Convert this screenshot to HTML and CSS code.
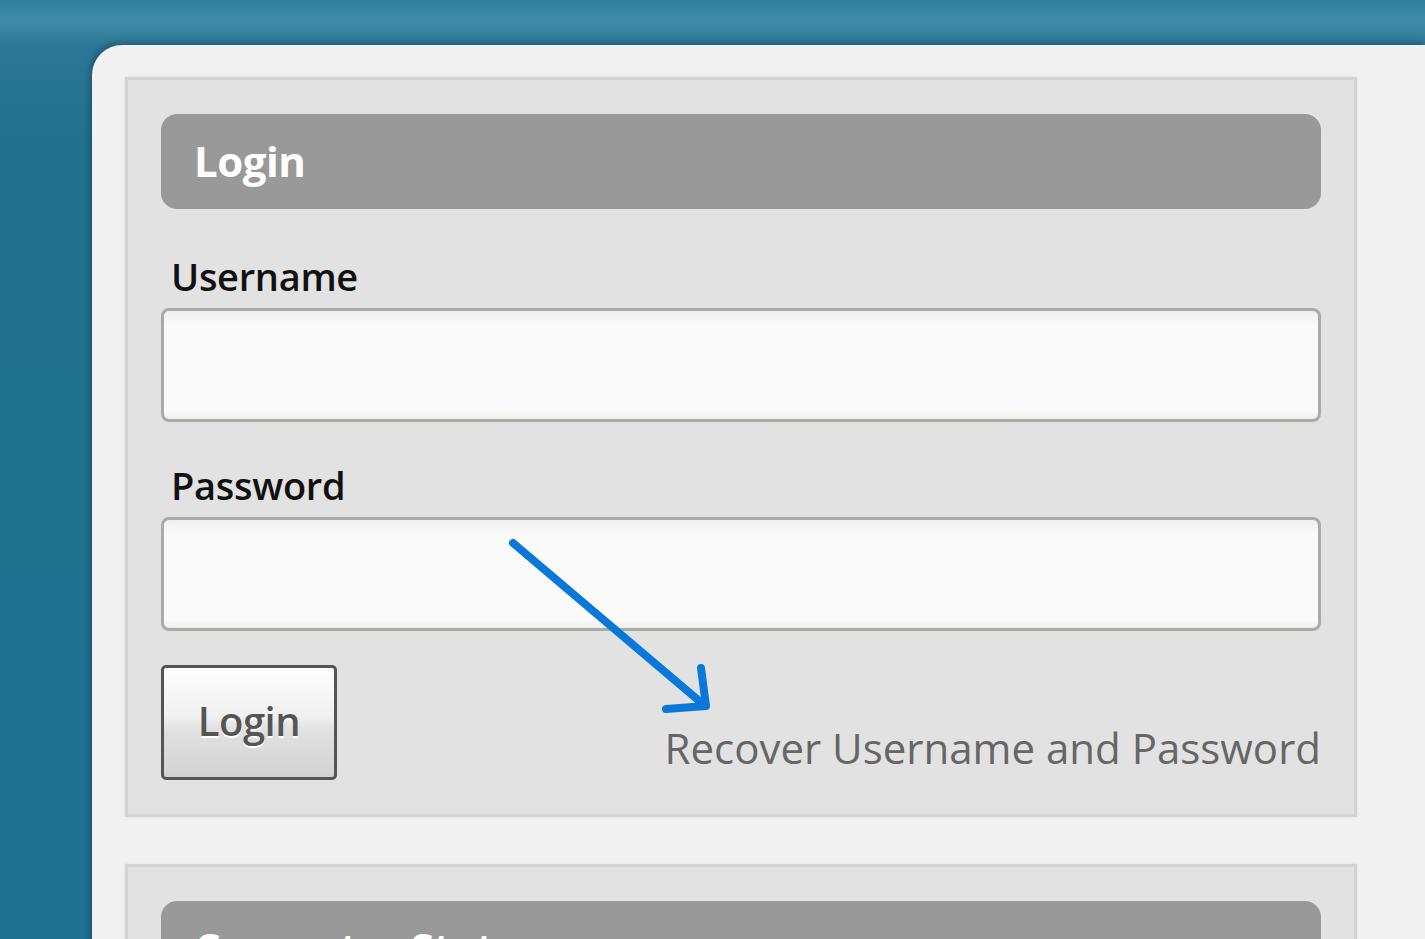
FILE: index.html
```html
<!DOCTYPE html>
<html lang="en">
<head>
    <meta charset="UTF-8">
    <title>Login</title>
    <link rel="stylesheet" href="styles.css">
</head>
<body>
    <div class="page">
        <div class="panel">
            <form class="box" action="#" method="post">
                <h2 class="head">Login</h2>
                <label class="lbl" for="user">Username</label>
                <input class="field" type="text" id="user" name="user">
                <label class="lbl" for="pwd">Password</label>
                <input class="field" type="password" id="pwd" name="pwd">
                <div class="actions">
                    <button class="btn" type="submit">Login</button>
                    <a class="recover" href="#">Recover Username and Password</a>
                </div>
                <svg class="arrow" width="220" height="190" viewBox="0 0 220 190">
                    <path d="M10 10 L201 172" />
                    <path d="M163 176 L203 173 L198 135" />
                </svg>
            </form>
            <div class="box">
                <h2 class="head">Computer Status</h2>
            </div>
        </div>
    </div>
</body>
</html>
```

FILE: styles.css
```css
html, body {
    margin: 0;
    height: 100%;
    overflow: hidden;
}
body {
    font-family: "Open Sans", "Noto Sans", sans-serif;
    background: linear-gradient(to bottom, #2f7e9b 0, #3e8ca7 20px, #2b7896 46px, #21718f 140px, #20708f 100%);
}
.page {
    padding: 45px 0 0 92px;
}
.panel {
    background: #f1f1f1;
    border-radius: 30px 0 0 0;
    padding: 32px 68px 0 33px;
    height: 1000px;
    box-shadow: -2px -2px 6px rgba(0, 30, 50, 0.35);
}
.box {
    position: relative;
    background: #e2e2e2;
    border: 3px solid #d3d3d3;
    box-shadow: 0 0 3px rgba(0, 0, 0, 0.08);
    padding: 34px 33px 34px 33px;
    margin: 0 0 47px 0;
    display: flex;
    flex-direction: column;
}
.head {
    margin: 0 0 4px 0;
    height: 95px;
    line-height: 93px;
    background: #999999;
    border-radius: 16px;
    color: #ffffff;
    font-size: 42px;
    font-weight: 700;
    padding-left: 33px;
    letter-spacing: -0.5px;
}
.lbl {
    font-size: 38px;
    font-weight: 600;
    color: #111111;
    line-height: 48px;
    padding: 39px 0 8px 10px;
    letter-spacing: -0.3px;
}
.field {
    height: 114px;
    box-sizing: border-box;
    border: 3px solid #aaaaaa;
    border-radius: 8px;
    background: linear-gradient(to bottom, #efefef 0, #fafafa 14px, #fafafa 92%, #f0f0ea 100%);
    font-family: inherit;
    font-size: 30px;
    padding: 0 14px;
    margin: 0;
}
.actions {
    display: flex;
    justify-content: space-between;
    align-items: flex-end;
    margin-top: 34px;
}
.btn {
    width: 176px;
    height: 115px;
    border: 3px solid #555555;
    border-radius: 5px;
    background: linear-gradient(to bottom, #fdfdfd 0, #f0f0f0 45%, #e2e2e2 55%, #d2d2d2 100%);
    color: #555555;
    font-family: inherit;
    font-size: 40px;
    font-weight: 600;
    text-shadow: 0 2px 0 #ffffff;
    letter-spacing: -0.5px;
    padding: 0 0 4px 0;
}
.recover {
    color: #666666;
    text-decoration: none;
    font-size: 42px;
    line-height: 48px;
    margin-bottom: 8px;
    letter-spacing: 0;
}
.arrow {
    position: absolute;
    left: 375px;
    top: 453px;
    fill: none;
    stroke: #0a78d8;
    stroke-width: 8;
    stroke-linecap: round;
    stroke-linejoin: round;
}
```
